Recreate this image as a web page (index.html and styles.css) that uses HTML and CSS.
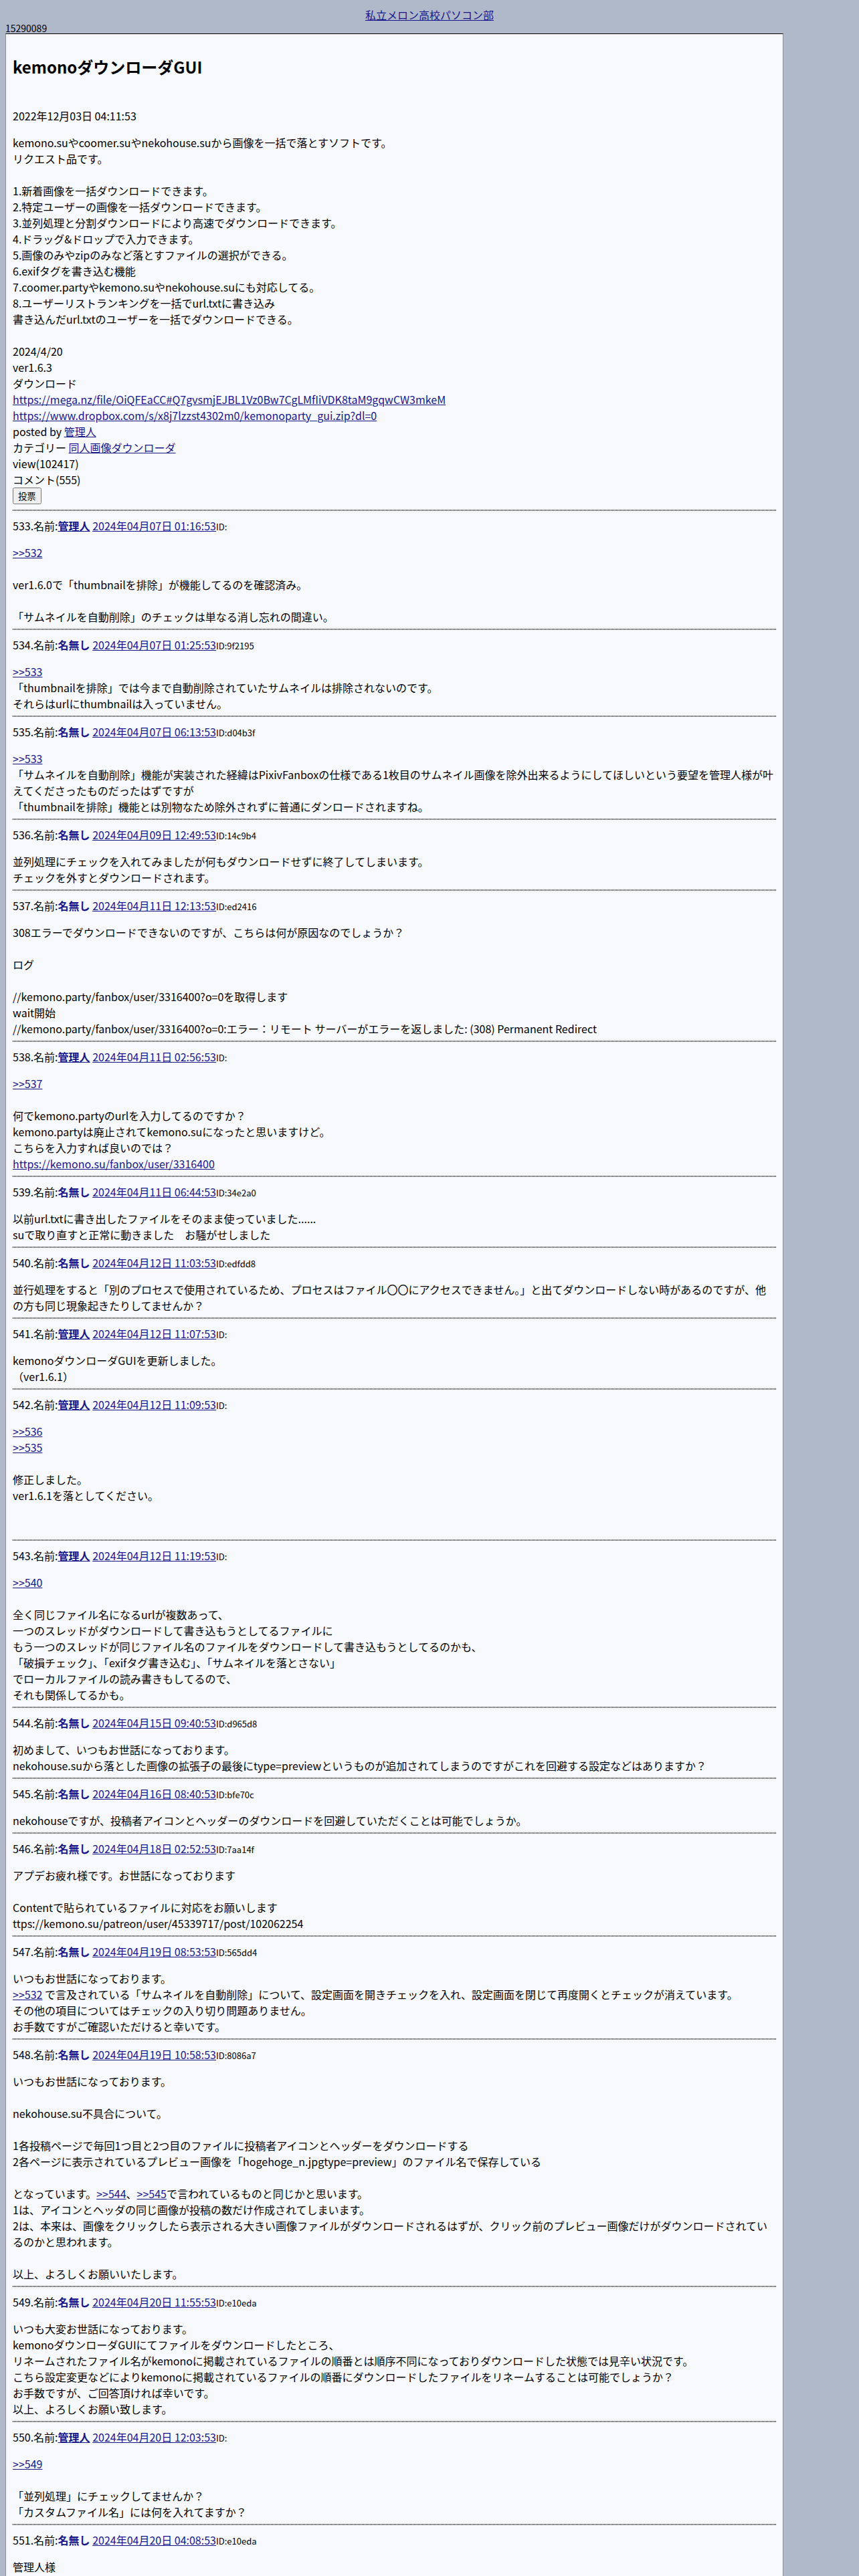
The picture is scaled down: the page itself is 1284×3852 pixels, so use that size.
FILE: index.html
```html
<!DOCTYPE html>
<html lang="ja">
<head>
<meta charset="utf-8">
<title>kemonoダウンローダGUI</title>
<link rel="stylesheet" href="styles.css">
</head>
<body>
<div class="site-title"><a href="#">私立メロン高校パソコン部</a></div>
<div class="site-id">15290089</div>
<div class="main">
  <h2 class="title">kemonoダウンローダGUI</h2>
  <div class="posted-date">2022年12月03日 04:11:53</div>
  <div class="desc">kemono.suやcoomer.suやnekohouse.suから画像を一括で落とすソフトです。<br>リクエスト品です。<br><br>1.新着画像を一括ダウンロードできます。<br>2.特定ユーザーの画像を一括ダウンロードできます。<br>3.並列処理と分割ダウンロードにより高速でダウンロードできます。<br>4.ドラッグ&amp;ドロップで入力できます。<br>5.画像のみやzipのみなど落とすファイルの選択ができる。<br>6.exifタグを書き込む機能<br>7.coomer.partyやkemono.suやnekohouse.suにも対応してる。<br>8.ユーザーリストランキングを一括でurl.txtに書き込み<br>書き込んだurl.txtのユーザーを一括でダウンロードできる。<br><br>2024/4/20<br>ver1.6.3<br>ダウンロード<br><a href="#">https://mega.nz/file/OiQFEaCC#Q7gvsmjEJBL1Vz0Bw7CgLMfIiVDK8taM9gqwCW3mkeM</a><br><a href="#">https://www.dropbox.com/s/x8j7lzzst4302m0/kemonoparty_gui.zip?dl=0</a><br>posted by <a href="#">管理人</a><br>カテゴリー <a href="#">同人画像ダウンローダ</a><br>view(102417)<br>コメント(555)</div>
  <div class="vote"><button class="vote-btn" type="button">投票</button></div>

  <hr class="sep">
  <div class="res-head">533.名前:<a href="#" class="admin">管理人</a> <a href="#">2024年04月07日 01:16:53</a><span class="rid">ID:</span></div>
  <div class="res-body"><a href="#">&gt;&gt;532</a><br><br>ver1.6.0で「thumbnailを排除」が機能してるのを確認済み。<br><br>「サムネイルを自動削除」のチェックは単なる消し忘れの間違い。</div>

  <hr class="sep">
  <div class="res-head">534.名前:<b class="anon">名無し</b> <a href="#">2024年04月07日 01:25:53</a><span class="rid">ID:9f2195</span></div>
  <div class="res-body"><a href="#">&gt;&gt;533</a><br>「thumbnailを排除」では今まで自動削除されていたサムネイルは排除されないのです。<br>それらはurlにthumbnailは入っていません。</div>

  <hr class="sep">
  <div class="res-head">535.名前:<b class="anon">名無し</b> <a href="#">2024年04月07日 06:13:53</a><span class="rid">ID:d04b3f</span></div>
  <div class="res-body"><a href="#">&gt;&gt;533</a><br>「サムネイルを自動削除」機能が実装された経緯はPixivFanboxの仕様である1枚目のサムネイル画像を除外出来るようにしてほしいという要望を管理人様が叶えてくださったものだったはずですが<br>「thumbnailを排除」機能とは別物なため除外されずに普通にダンロードされますね。</div>

  <hr class="sep">
  <div class="res-head">536.名前:<b class="anon">名無し</b> <a href="#">2024年04月09日 12:49:53</a><span class="rid">ID:14c9b4</span></div>
  <div class="res-body">並列処理にチェックを入れてみましたが何もダウンロードせずに終了してしまいます。<br>チェックを外すとダウンロードされます。</div>

  <hr class="sep">
  <div class="res-head">537.名前:<b class="anon">名無し</b> <a href="#">2024年04月11日 12:13:53</a><span class="rid">ID:ed2416</span></div>
  <div class="res-body">308エラーでダウンロードできないのですが、こちらは何が原因なのでしょうか？<br><br>ログ<br><br>//kemono.party/fanbox/user/3316400?o=0を取得します<br>wait開始<br>//kemono.party/fanbox/user/3316400?o=0:エラー：リモート サーバーがエラーを返しました: (308) Permanent Redirect</div>

  <hr class="sep">
  <div class="res-head">538.名前:<a href="#" class="admin">管理人</a> <a href="#">2024年04月11日 02:56:53</a><span class="rid">ID:</span></div>
  <div class="res-body"><a href="#">&gt;&gt;537</a><br><br>何でkemono.partyのurlを入力してるのですか？<br>kemono.partyは廃止されてkemono.suになったと思いますけど。<br>こちらを入力すれば良いのでは？<br><a href="#">https://kemono.su/fanbox/user/3316400</a></div>

  <hr class="sep">
  <div class="res-head">539.名前:<b class="anon">名無し</b> <a href="#">2024年04月11日 06:44:53</a><span class="rid">ID:34e2a0</span></div>
  <div class="res-body">以前url.txtに書き出したファイルをそのまま使っていました......<br>suで取り直すと正常に動きました　お騒がせしました</div>

  <hr class="sep">
  <div class="res-head">540.名前:<b class="anon">名無し</b> <a href="#">2024年04月12日 11:03:53</a><span class="rid">ID:edfdd8</span></div>
  <div class="res-body">並行処理をすると「別のプロセスで使用されているため、プロセスはファイル〇〇にアクセスできません。」と出てダウンロードしない時があるのですが、他の方も同じ現象起きたりしてませんか？</div>

  <hr class="sep">
  <div class="res-head">541.名前:<a href="#" class="admin">管理人</a> <a href="#">2024年04月12日 11:07:53</a><span class="rid">ID:</span></div>
  <div class="res-body">kemonoダウンローダGUIを更新しました。<br>（ver1.6.1）</div>

  <hr class="sep">
  <div class="res-head">542.名前:<a href="#" class="admin">管理人</a> <a href="#">2024年04月12日 11:09:53</a><span class="rid">ID:</span></div>
  <div class="res-body"><a href="#">&gt;&gt;536</a><br><a href="#">&gt;&gt;535</a><br><br>修正しました。<br>ver1.6.1を落としてください。<br><br><br></div>

  <hr class="sep">
  <div class="res-head">543.名前:<a href="#" class="admin">管理人</a> <a href="#">2024年04月12日 11:19:53</a><span class="rid">ID:</span></div>
  <div class="res-body"><a href="#">&gt;&gt;540</a><br><br>全く同じファイル名になるurlが複数あって、<br>一つのスレッドがダウンロードして書き込もうとしてるファイルに<br>もう一つのスレッドが同じファイル名のファイルをダウンロードして書き込もうとしてるのかも、<br>「破損チェック」、「exifタグ書き込む」、「サムネイルを落とさない」<br>でローカルファイルの読み書きもしてるので、<br>それも関係してるかも。</div>

  <hr class="sep">
  <div class="res-head">544.名前:<b class="anon">名無し</b> <a href="#">2024年04月15日 09:40:53</a><span class="rid">ID:d965d8</span></div>
  <div class="res-body">初めまして、いつもお世話になっております。<br>nekohouse.suから落とした画像の拡張子の最後にtype=previewというものが追加されてしまうのですがこれを回避する設定などはありますか？</div>

  <hr class="sep">
  <div class="res-head">545.名前:<b class="anon">名無し</b> <a href="#">2024年04月16日 08:40:53</a><span class="rid">ID:bfe70c</span></div>
  <div class="res-body">nekohouseですが、投稿者アイコンとヘッダーのダウンロードを回避していただくことは可能でしょうか。</div>

  <hr class="sep">
  <div class="res-head">546.名前:<b class="anon">名無し</b> <a href="#">2024年04月18日 02:52:53</a><span class="rid">ID:7aa14f</span></div>
  <div class="res-body">アプデお疲れ様です。お世話になっております<br><br>Contentで貼られているファイルに対応をお願いします<br>ttps://kemono.su/patreon/user/45339717/post/102062254</div>

  <hr class="sep">
  <div class="res-head">547.名前:<b class="anon">名無し</b> <a href="#">2024年04月19日 08:53:53</a><span class="rid">ID:565dd4</span></div>
  <div class="res-body">いつもお世話になっております。<br><a href="#">&gt;&gt;532</a> で言及されている「サムネイルを自動削除」について、設定画面を開きチェックを入れ、設定画面を閉じて再度開くとチェックが消えています。<br>その他の項目についてはチェックの入り切り問題ありません。<br>お手数ですがご確認いただけると幸いです。</div>

  <hr class="sep">
  <div class="res-head">548.名前:<b class="anon">名無し</b> <a href="#">2024年04月19日 10:58:53</a><span class="rid">ID:8086a7</span></div>
  <div class="res-body">いつもお世話になっております。<br><br>nekohouse.su不具合について。<br><br>1各投稿ページで毎回1つ目と2つ目のファイルに投稿者アイコンとヘッダーをダウンロードする<br>2各ページに表示されているプレビュー画像を「hogehoge_n.jpgtype=preview」のファイル名で保存している<br><br>となっています。<a href="#">&gt;&gt;544</a>、<a href="#">&gt;&gt;545</a>で言われているものと同じかと思います。<br>1は、アイコンとヘッダの同じ画像が投稿の数だけ作成されてしまいます。<br>2は、本来は、画像をクリックしたら表示される大きい画像ファイルがダウンロードされるはずが、クリック前のプレビュー画像だけがダウンロードされているのかと思われます。<br><br>以上、よろしくお願いいたします。</div>

  <hr class="sep">
  <div class="res-head">549.名前:<b class="anon">名無し</b> <a href="#">2024年04月20日 11:55:53</a><span class="rid">ID:e10eda</span></div>
  <div class="res-body">いつも大変お世話になっております。<br>kemonoダウンローダGUIにてファイルをダウンロードしたところ、<br>リネームされたファイル名がkemonoに掲載されているファイルの順番とは順序不同になっておりダウンロードした状態では見辛い状況です。<br>こちら設定変更などによりkemonoに掲載されているファイルの順番にダウンロードしたファイルをリネームすることは可能でしょうか？<br>お手数ですが、ご回答頂ければ幸いです。<br>以上、よろしくお願い致します。</div>

  <hr class="sep">
  <div class="res-head">550.名前:<a href="#" class="admin">管理人</a> <a href="#">2024年04月20日 12:03:53</a><span class="rid">ID:</span></div>
  <div class="res-body"><a href="#">&gt;&gt;549</a><br><br>「並列処理」にチェックしてませんか？<br>「カスタムファイル名」には何を入れてますか？</div>

  <hr class="sep">
  <div class="res-head">551.名前:<b class="anon">名無し</b> <a href="#">2024年04月20日 04:08:53</a><span class="rid">ID:e10eda</span></div>
  <div class="res-body">管理人様</div>
</div>
</body>
</html>
```

FILE: styles.css
```css
html {
  background: #b0b9ca;
}

body {
  margin: 8px;
  background: #b0b9ca;
  color: #000;
  font-family: "Noto Sans CJK JP", "Noto Sans", sans-serif;
  font-size: 16px;
  line-height: 24px;
}

a {
  color: #17178c;
}

.site-title {
  text-align: center;
  padding-top: 2px;
}

.site-id {
  font-size: 14px;
  line-height: 16px;
}

.main {
  width: 90%;
  padding: 10px;
  background: #f8f9fd;
  border: 1px solid #8c919d;
  border-top-color: #000;
}

.title {
  margin: 21px 0 0;
  font-size: 24px;
  line-height: 36px;
  font-weight: bold;
}

.posted-date {
  margin-top: 43px;
}

.desc {
  margin-top: 16px;
}

.vote {
  margin-bottom: 8px;
}

.vote-btn {
  display: block;
  font-family: "Noto Sans CJK JP", sans-serif;
  font-size: 13.333px;
}

.sep {
  margin: 0;
  height: 0;
  border: 0;
  border-top: 1px dotted #333;
  border-bottom: 1px dotted #333;
  border-left: 1px solid #333;
  border-right: 1px solid #333;
}

.res-head {
  margin-top: 10px;
}

.admin,
.anon {
  font-weight: bold;
}

.anon {
  color: #17178c;
}

.rid {
  font-size: 13px;
  line-height: 16px;
}

.res-body {
  margin-top: 16px;
  margin-bottom: 6px;
}
```
